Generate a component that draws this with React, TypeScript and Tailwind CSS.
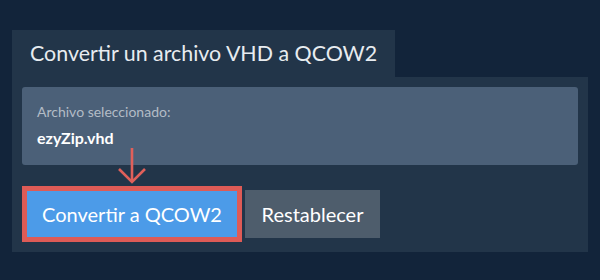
import React from 'react';

const ArrowDown: React.FC = () => (
    <svg width="30" height="36" viewBox="0 0 30 36" fill="none" stroke="#e0605a" strokeWidth="2.6" strokeLinecap="butt">
        <line x1="15" y1="0" x2="15" y2="34" />
        <polyline points="2,21 15,34 28,21" />
    </svg>
);

export default function App() {
    return (
        <div className="w-[600px] h-[280px] bg-[#12243a] pt-[30px] pl-[12px] font-['Lato',sans-serif]">
            {/* Tab header */}
            <div className="w-[383px] h-[47px] bg-[#223549] flex items-center pl-[18px]">
                <h1 className="text-[21.4px] text-[#e8ecf0] whitespace-nowrap">Convertir un archivo VHD a QCOW2</h1>
            </div>

            {/* Panel */}
            <div className="w-[576px] bg-[#223549] p-[10px] relative">
                <div className="bg-[#4b6078] rounded-[3px] h-[78px] px-[15px] pt-[17px]">
                    <p className="text-[14px] leading-[16px] text-[#b3bcc6]">Archivo seleccionado:</p>
                    <p className="text-[16px] leading-[20px] font-bold text-white mt-[8px]">ezyZip.vhd</p>
                </div>

                <div className="absolute left-[105px] top-[71px]">
                    <ArrowDown />
                </div>

                <div className="flex items-center mt-[21px]">
                    <div className="border-[5px] border-[#de5b56]">
                        <button className="h-[46px] w-[210px] bg-[#4c9be8] text-white text-[20px]">Convertir a QCOW2</button>
                    </div>
                    <button className="ml-[3px] h-[48px] w-[135px] bg-[#4e5d6c] text-white text-[20px]">Restablecer</button>
                </div>
            </div>
        </div>
    );
}
